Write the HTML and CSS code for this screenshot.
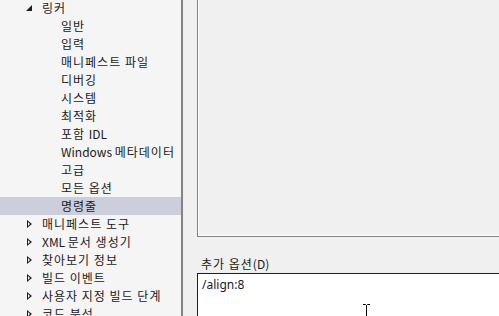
FILE: index.html
```html
<!DOCTYPE html>
<html>
<head>
  <title>링커 - 명령줄</title>
  <link rel="stylesheet" href="styles.css">
</head>
<body>
  <div class="window">
    <div class="tree">
      <div class="row level1"><span class="arrow open"></span>링커</div>
      <div class="row level2">일반</div>
      <div class="row level2">입력</div>
      <div class="row level2">매니페스트 파일</div>
      <div class="row level2">디버깅</div>
      <div class="row level2">시스템</div>
      <div class="row level2">최적화</div>
      <div class="row level2">포함 <span class="latin">IDL</span></div>
      <div class="row level2"><span class="latin">Windows </span>메타데이터</div>
      <div class="row level2">고급</div>
      <div class="row level2">모든 옵션</div>
      <div class="row level2 selected">명령줄</div>
      <div class="row level1"><span class="arrow closed"></span>매니페스트 도구</div>
      <div class="row level1"><span class="arrow closed"></span><span class="latin">XML </span>문서 생성기</div>
      <div class="row level1"><span class="arrow closed"></span>찾아보기 정보</div>
      <div class="row level1"><span class="arrow closed"></span>빌드 이벤트</div>
      <div class="row level1"><span class="arrow closed"></span>사용자 지정 빌드 단계</div>
      <div class="row level1"><span class="arrow closed"></span>코드 분석</div>
    </div>

    <div class="splitter"></div>

    <div class="props">
      <div class="all-options"></div>
      <div class="opt-label">추가 옵션<span class="latin">(D)</span></div>
      <div class="opt-box">
        /align:8
        <svg class="ibeam" width="7" height="14" viewBox="0 0 7 14">
          <path d="M0 0.5h2.5l1 1 1-1h2.5M3.5 1.5v12" fill="none" stroke="#000" stroke-width="1"/>
        </svg>
      </div>
    </div>
  </div>
</body>
</html>
```

FILE: styles.css
```css
body {
  margin: 0;
  padding: 0;
  width: 499px;
  height: 316px;
  overflow: hidden;
  font-family: "Noto Sans CJK KR", "Noto Sans", sans-serif;
  font-size: 12px;
  color: #1a1a1a;
  background-color: #f0f0f0;
}

.window {
  display: flex;
  height: 316px;
}

.tree {
  width: 181px;
  flex-shrink: 0;
  background-color: #f5f5f5;
  margin-top: -1px;
  letter-spacing: 1px;
}

.latin {
  letter-spacing: 0;
}

.row {
  height: 18px;
  line-height: 18px;
  white-space: nowrap;
}

.level1 {
  padding-left: 26px;
}

.level2 {
  padding-left: 61px;
}

.selected {
  background-color: #cccedb;
}

.arrow {
  display: inline-block;
  vertical-align: top;
  width: 16px;
  height: 18px;
  position: relative;
}

.arrow.open::before {
  content: "";
  position: absolute;
  left: 0;
  top: 6px;
  border-style: solid;
  border-width: 0 0 6px 6px;
  border-color: transparent transparent #1e1e1e transparent;
}

.arrow.closed::before {
  content: "";
  position: absolute;
  left: 1px;
  top: 5px;
  border-style: solid;
  border-width: 4px 0 4px 5px;
  border-color: transparent transparent transparent #1e1e1e;
}

.arrow.closed::after {
  content: "";
  position: absolute;
  left: 2px;
  top: 7px;
  border-style: solid;
  border-width: 2px 0 2px 2.5px;
  border-color: transparent transparent transparent #f5f5f5;
}

.splitter {
  width: 2px;
  flex-shrink: 0;
  background-color: #828282;
}

.props {
  flex: 1;
  padding-left: 14px;
  display: flex;
  flex-direction: column;
}

.all-options {
  height: 236px;
  border-left: 1px solid #828282;
  border-bottom: 1px solid #828282;
  box-shadow: inset 1px 0 #ffffff, inset 0 -1px #ffffff;
  flex-shrink: 0;
}

.opt-label {
  padding-left: 4px;
  margin-top: 17px;
  height: 19px;
  line-height: 19px;
  letter-spacing: 1px;
}

.opt-box {
  position: relative;
  flex: 1;
  background-color: #ffffff;
  border-top: 1px solid #1e1e1e;
  border-left: 1px solid #1e1e1e;
  padding: 2px 4px;
  line-height: 18px;
  font-family: "Noto Sans", "Noto Sans CJK KR", sans-serif;
}

.ibeam {
  position: absolute;
  left: 165px;
  top: 30px;
}
```
